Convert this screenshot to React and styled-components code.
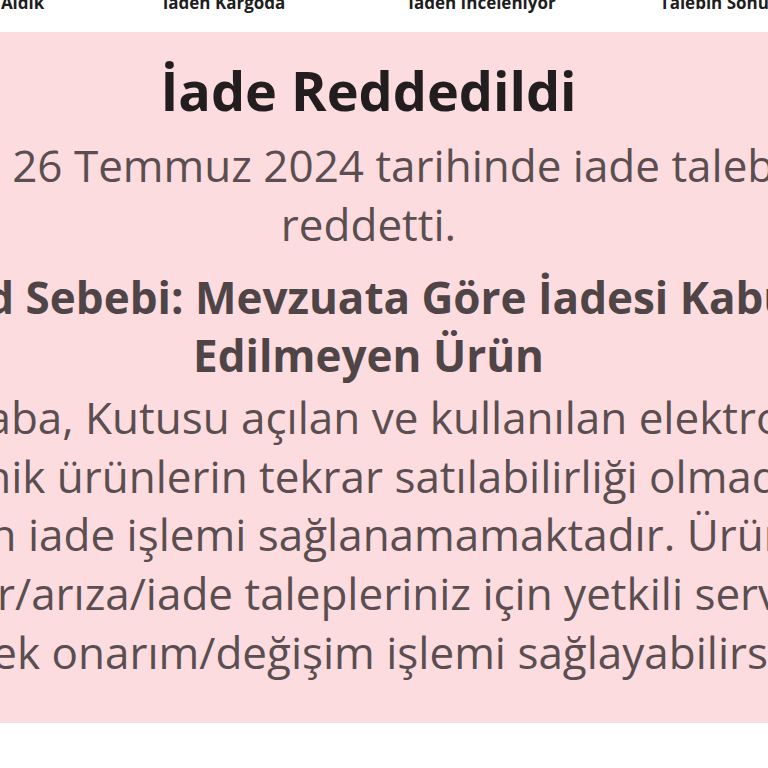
import React from "react";
import styled, { createGlobalStyle } from "styled-components";

const Global = createGlobalStyle`
  html, body {
    margin: 0;
    padding: 0;
    background: #ffffff;
    overflow: hidden;
    width: 768px;
    height: 768px;
  }
  body {
    font-family: "Open Sans", "Noto Sans", sans-serif;
  }
`;

const Page = styled.div`
  width: 768px;
  height: 768px;
  overflow: hidden;
  display: flex;
  flex-direction: column;
`;

const Stepper = styled.div`
  display: grid;
  grid-template-columns: repeat(4, 258px);
  width: 1032px;
  margin-left: -163px;
  margin-top: -9px;
  height: 41px;
  flex-shrink: 0;
`;

const StepLabel = styled.div`
  text-align: center;
  font-size: 17px;
  font-weight: 700;
  line-height: 23px;
  color: #1e1e1e;
  white-space: nowrap;
`;

const Card = styled.section`
  flex-shrink: 0;
  background: #fcdcdf;
  border-bottom: 2px solid #efe0e4;
  padding: 27px 0 39px;
  overflow: hidden;
`;

const Column = styled.div`
  width: 1100px;
  margin-left: -181.5px;
  text-align: center;
  display: flex;
  flex-direction: column;
`;

const Title = styled.h1`
  margin: 0 0 15px;
  font-size: 54px;
  line-height: 62px;
  font-weight: 700;
  color: #221e1f;
`;

const Line = styled.span`
  display: block;
  white-space: nowrap;
`;

const Subtitle = styled.p`
  margin: 0 0 15px;
  font-size: 44px;
  line-height: 58.5px;
  font-weight: 400;
  color: #5a4e50;
`;

const Reason = styled.h2`
  margin: 0 0 4px;
  font-size: 44px;
  line-height: 58px;
  font-weight: 700;
  color: #4f4547;
`;

const Body = styled.p`
  margin: 0;
  font-size: 44px;
  line-height: 58.7px;
  font-weight: 400;
  color: #5a4e50;
`;

const steps = ["İade Talebini Aldık", "İaden Kargoda", "İaden İnceleniyor", "Talebin Sonuçlandı"];

const bodyLines = [
  "Merhaba, Kutusu açılan ve kullanılan elektronik/",
  "Teknik ürünlerin tekrar satılabilirliği olmadığı",
  "için iade işlemi sağlanamamaktadır. Ürün",
  "hasar/arıza/iade talepleriniz için yetkili servise",
  "giderek onarım/değişim işlemi sağlayabilirsiniz.",
];

export default function App() {
  return (
    <>
      <Global />
      <Page>
        <Stepper>
          {steps.map((s) => (
            <StepLabel key={s}>{s}</StepLabel>
          ))}
        </Stepper>
        <Card>
          <Column>
            <Title>İade Reddedildi</Title>
            <Subtitle>
              <Line>Satıcı, 26 Temmuz 2024 tarihinde iade talebinizi</Line>
              <Line>reddetti.</Line>
            </Subtitle>
            <Reason>
              <Line>Red Sebebi: Mevzuata Göre İadesi Kabul</Line>
              <Line>Edilmeyen Ürün</Line>
            </Reason>
            <Body>
              {bodyLines.map((l) => (
                <Line key={l}>{l}</Line>
              ))}
            </Body>
          </Column>
        </Card>
      </Page>
    </>
  );
}
